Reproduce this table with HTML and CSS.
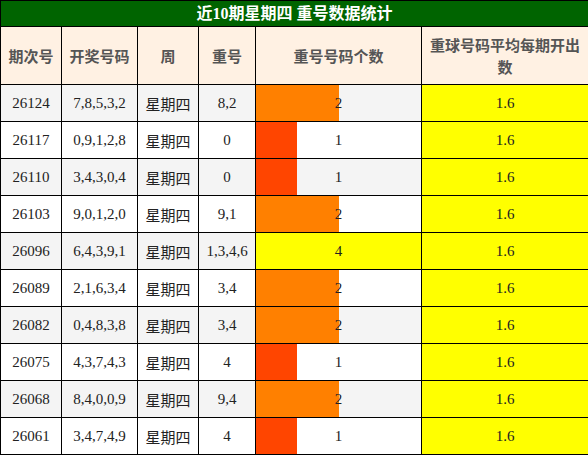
FILE: index.html
```html
<!DOCTYPE html>
<html lang="zh-CN">
<head>
    <meta charset="UTF-8">
    <meta name="viewport" content="width=device-width, initial-scale=1.0">
    <title>重号数据统计</title>
    <link rel="stylesheet" href="styles.css">
</head>
<body>
    <table class="stats">
        <colgroup>
            <col class="c-issue">
            <col class="c-nums">
            <col class="c-week">
            <col class="c-rep">
            <col class="c-count">
            <col class="c-avg">
        </colgroup>
        <thead>
            <tr class="title-row">
                <th colspan="6">近10期星期四 重号数据统计</th>
            </tr>
            <tr class="head-row">
                <th>期次号</th>
                <th>开奖号码</th>
                <th>周</th>
                <th>重号</th>
                <th>重号号码个数</th>
                <th class="avg-head">重球号码平均每期开出数</th>
            </tr>
        </thead>
        <tbody id="rows"></tbody>
    </table>

    <script>
        const data = [
            ['26124', '7,8,5,3,2', '8,2', 2],
            ['26117', '0,9,1,2,8', '0', 1],
            ['26110', '3,4,3,0,4', '0', 1],
            ['26103', '9,0,1,2,0', '9,1', 2],
            ['26096', '6,4,3,9,1', '1,3,4,6', 4],
            ['26089', '2,1,6,3,4', '3,4', 2],
            ['26082', '0,4,8,3,8', '3,4', 2],
            ['26075', '4,3,7,4,3', '4', 1],
            ['26068', '8,4,0,0,9', '9,4', 2],
            ['26061', '3,4,7,4,9', '4', 1]
        ];
        const maxCount = 4;
        const tbody = document.getElementById('rows');

        data.forEach(row => {
            const [issue, nums, rep, count] = row;
            const tr = document.createElement('tr');
            tr.innerHTML = `
                <td>${issue}</td>
                <td>${nums}</td>
                <td class="week">星期四</td>
                <td>${rep}</td>
                <td class="count-cell">
                    <div class="bar bar-${count}" style="width: ${count / maxCount * 100}%"></div>
                    <span class="count-num">${count}</span>
                </td>
                <td class="avg">1.6</td>`;
            tbody.appendChild(tr);
        });
    </script>
</body>
</html>
```

FILE: styles.css
```css
body {
    margin: 0;
    background-color: #fff;
}
.stats {
    width: 588px;
    border-collapse: collapse;
    table-layout: fixed;
    font-family: "Liberation Serif", "Noto Sans CJK SC", serif;
    font-size: 15px;
    color: #222;
}
.c-issue { width: 61px; }
.c-nums { width: 76px; }
.c-week { width: 61px; }
.c-rep { width: 57px; }
.c-count { width: 166px; }
.c-avg { width: 167px; }
.stats th,
.stats td {
    border: 1px solid #000;
    padding: 0;
    text-align: center;
}
.title-row th {
    height: 25px;
    background-color: #006400;
    color: #fff;
    font-size: 16px;
    font-weight: bold;
    line-height: 20px;
}
.head-row th {
    height: 57px;
    background-color: #fff1e3;
    color: #555;
    font-family: "Noto Sans CJK SC", sans-serif;
    font-size: 15px;
    font-weight: bold;
    line-height: 22px;
}
.head-row .avg-head {
    padding: 0 6px;
}
.stats tbody td {
    height: 36px;
}
.stats tbody tr:nth-child(odd) {
    background-color: #f4f4f4;
}
.stats tbody tr:nth-child(even) {
    background-color: #fff;
}
.week {
    font-family: "Noto Sans CJK SC", sans-serif;
}
.count-cell {
    position: relative;
}
.bar {
    position: absolute;
    top: 0;
    left: 0;
    bottom: 0;
}
.bar-1 { background-color: #ff4500; }
.bar-2 { background-color: #ff8000; }
.bar-3 { background-color: #ffa500; }
.bar-4 { background-color: #ffff00; }
.count-num {
    position: relative;
}
.stats tbody td.avg {
    background-color: #ffff00;
}
```
